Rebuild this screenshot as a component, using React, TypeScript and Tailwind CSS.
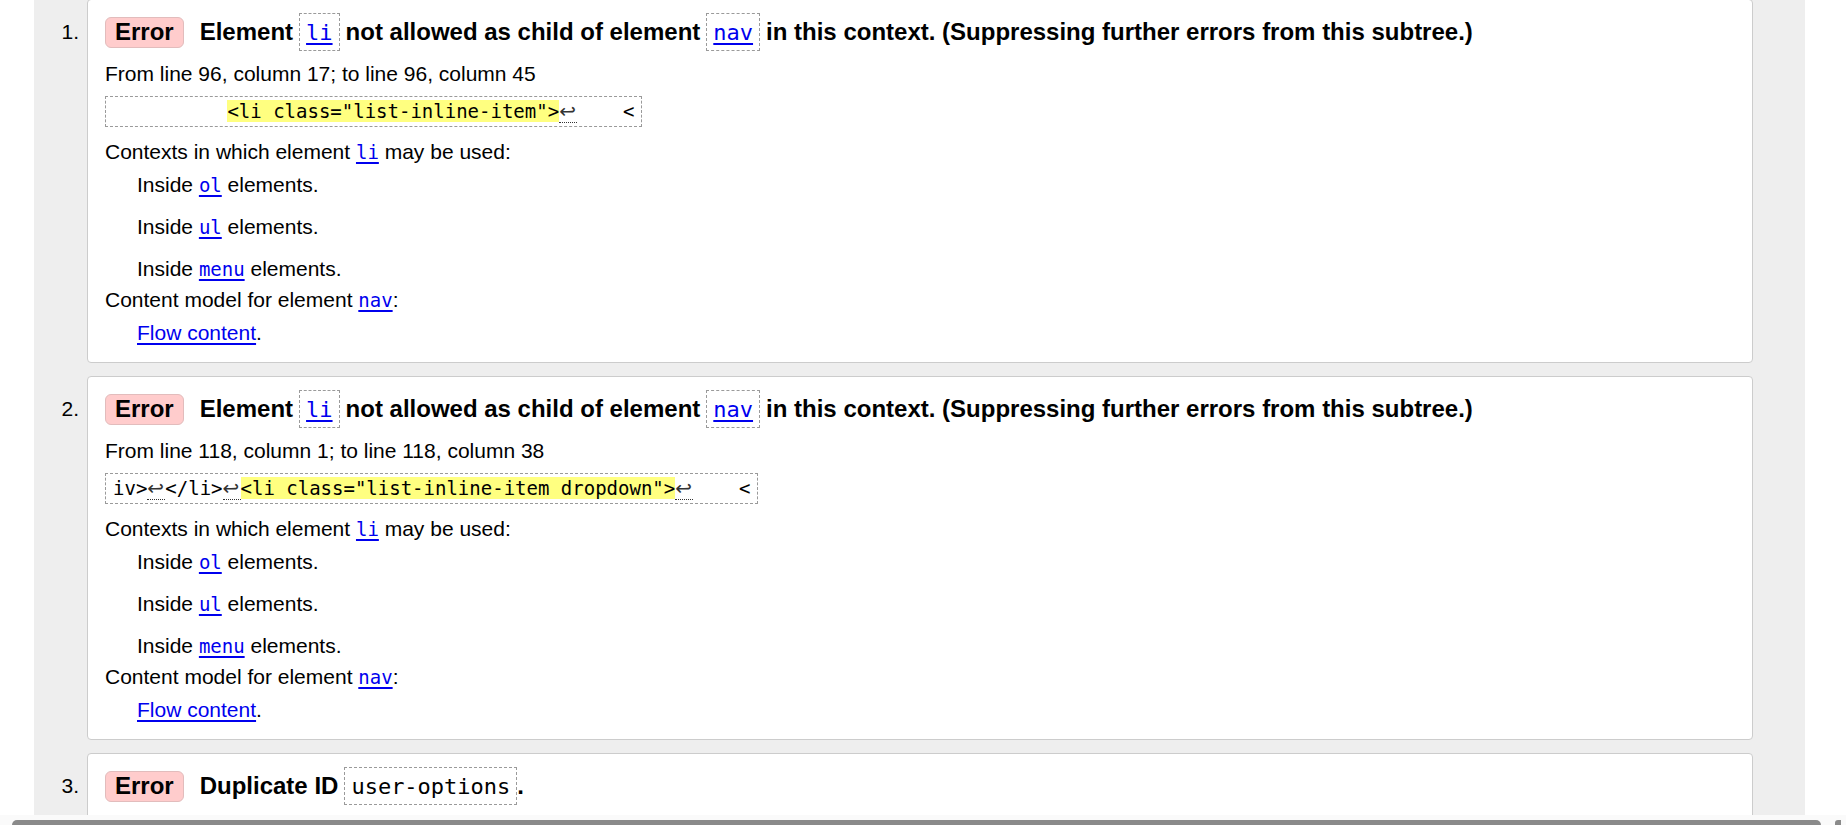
import type { ReactNode } from 'react';

type Seg = { text: string; kind?: 'hl' | 'br' };

type NavIssue = {
  n: number;
  from: string;
  extract: Seg[];
};

const issues: NavIssue[] = [
  {
    n: 1,
    from: 'From line 96, column 17; to line 96, column 45',
    extract: [
      { text: '          ' },
      { text: '<li class="list-inline-item">', kind: 'hl' },
      { text: '↩', kind: 'br' },
      { text: '    <' },
    ],
  },
  {
    n: 2,
    from: 'From line 118, column 1; to line 118, column 38',
    extract: [
      { text: 'iv>' },
      { text: '↩', kind: 'br' },
      { text: '</li>' },
      { text: '↩', kind: 'br' },
      { text: '<li class="list-inline-item dropdown">', kind: 'hl' },
      { text: '↩', kind: 'br' },
      { text: '    <' },
    ],
  },
];

const mono = "font-['DejaVu_Sans_Mono','Liberation_Mono',monospace]";

const TitleCode = ({ children, link = false }: { children: ReactNode; link?: boolean }) => (
  <span className={`flex h-[38px] items-center border border-dashed border-[#9a9a9a] px-[6px] text-[22px] font-normal ${mono}`}>
    {link ? (
      <a className="text-[#0000ee] underline decoration-2 underline-offset-[3px]">{children}</a>
    ) : (
      children
    )}
  </span>
);

const BodyCode = ({ children }: { children: ReactNode }) => (
  <a className={`text-[19px] text-[#0000ee] underline decoration-2 underline-offset-[3px] ${mono}`}>{children}</a>
);

const Badge = () => (
  <span className="mr-[10px] flex h-[31px] items-center rounded-[6px] border border-[#e2bcbc] bg-[#ffcccc] px-[9px] text-[24px] font-bold">
    Error
  </span>
);

const Item = ({ n, children }: { n: number; children: ReactNode }) => (
  <li className="flex">
    <div className="mt-[14px] flex h-[38px] w-[53px] shrink-0 items-center justify-end pr-[8px] text-[21px]">
      {n}.
    </div>
    <div className="flex-1 rounded-[4px] border border-[#cccccc] bg-white pb-[17px] pl-[17px] pt-[13px]">
      {children}
    </div>
  </li>
);

const Extract = ({ segs }: { segs: Seg[] }) => (
  <div className="mt-[10px] flex">
    <pre className={`h-[31px] border border-dashed border-[#9a9a9a] px-[7px] text-[19px] leading-[29px] ${mono}`}>
      {segs.map((s, i) =>
        s.kind === 'hl' ? (
          <span key={i} className="bg-[#ffff80]">
            {s.text}
          </span>
        ) : s.kind === 'br' ? (
          <span
            key={i}
            className="inline-block w-[18px] border-b border-dotted border-[#333] font-['DejaVu_Sans',sans-serif] text-[20px] leading-[22px] text-[#333]"
          >
            {s.text}
          </span>
        ) : (
          <span key={i}>{s.text}</span>
        ),
      )}
    </pre>
  </div>
);

export default function App() {
  return (
    <div className="h-[825px] w-[1846px] overflow-hidden bg-white font-['Liberation_Sans',Arial,sans-serif] text-black">
      <div className="ml-[34px] h-[815px] w-[1771px] overflow-hidden bg-[#eeeeee] pr-[52px]">
        <ol className="-mt-px flex flex-col gap-[13px]">
          {issues.map((issue) => (
            <Item key={issue.n} n={issue.n}>
              <div className="flex h-[38px] items-center gap-[6px] text-[24px] font-bold">
                <Badge />
                <span>Element</span>
                <TitleCode link>li</TitleCode>
                <span>not allowed as child of element</span>
                <TitleCode link>nav</TitleCode>
                <span>in this context. (Suppressing further errors from this subtree.)</span>
              </div>
              <p className="mt-[11px] text-[21px] leading-[24px]">{issue.from}</p>
              <Extract segs={issue.extract} />
              <div className="text-[21px] leading-[24px]">
                <p className="mt-[13px]">
                  Contexts in which element <BodyCode>li</BodyCode> may be used:
                </p>
                <div className="pl-[32px]">
                  <p className="mt-[9px]">
                    Inside <BodyCode>ol</BodyCode> elements.
                  </p>
                  <p className="mt-[18px]">
                    Inside <BodyCode>ul</BodyCode> elements.
                  </p>
                  <p className="mt-[18px]">
                    Inside <BodyCode>menu</BodyCode> elements.
                  </p>
                </div>
                <p className="mt-[7px]">
                  Content model for element <BodyCode>nav</BodyCode>:
                </p>
                <p className="mt-[9px] pl-[32px]">
                  <a className="text-[#0000ee] underline decoration-2 underline-offset-[3px]">Flow content</a>.
                </p>
              </div>
            </Item>
          ))}
          <Item n={3}>
            <div className="flex h-[38px] items-center gap-[6px] text-[24px] font-bold">
              <Badge />
              <span>Duplicate ID</span>
              <TitleCode>user-options</TitleCode>
              <span className="-ml-[6px]">.</span>
            </div>
            <div className="h-[120px]" />
          </Item>
        </ol>
      </div>
      <div className="flex h-[10px] items-end bg-[#fafafa]">
        <div className="ml-[12px] h-[5px] w-[1809px] rounded-t-full bg-[#8a8a8a]" />
        <div className="ml-[14px] h-[5px] w-[6px] rounded-tl-[3px] bg-[#8a8a8a]" />
      </div>
    </div>
  );
}
